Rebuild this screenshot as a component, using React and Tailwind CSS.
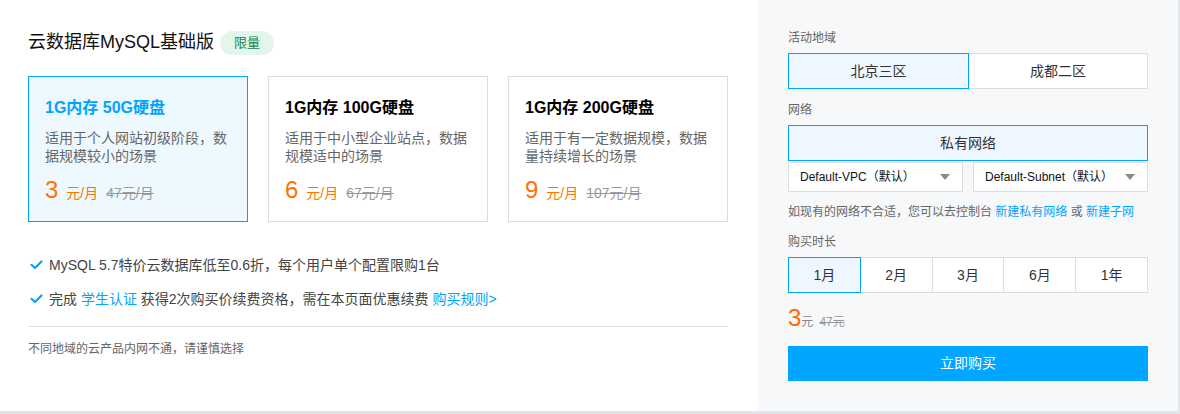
import React from "react";

const FONT = { fontFamily: '"Liberation Sans", "Noto Sans CJK SC", sans-serif' };

function Check() {
  return (
    <svg width="13" height="10" viewBox="0 0 13 10" className="shrink-0">
      <polyline points="1.5,4.8 5,8 11.5,1.5" fill="none" stroke="#00a4ff" strokeWidth="2.2" strokeLinecap="round" strokeLinejoin="round" />
    </svg>
  );
}

function Caret() {
  return (
    <svg width="10" height="6" viewBox="0 0 10 6">
      <polygon points="0,0 10,0 5,6" fill="#8a8a8a" />
    </svg>
  );
}

const plans = [
  { title: "1G内存 50G硬盘", desc: ["适用于个人网站初级阶段，数", "据规模较小的场景"], price: "3", orig: "47元/月", active: true },
  { title: "1G内存 100G硬盘", desc: ["适用于中小型企业站点，数据", "规模适中的场景"], price: "6", orig: "67元/月" },
  { title: "1G内存 200G硬盘", desc: ["适用于有一定数据规模，数据", "量持续增长的场景"], price: "9", orig: "107元/月" },
];

export default function App() {
  return (
    <div style={FONT} className="w-[1180px] h-[414px] bg-[#e1e4e8] overflow-hidden">
      <div className="w-[1178px] h-[411px] flex bg-white">
        {/* Left */}
        <div className="w-[758px] pl-[28px] pr-[30px]">
          <div className="mt-[29px] flex items-center h-[26px]">
            <span className="text-[18px] leading-[26px] text-[#111]">云数据库MySQL基础版</span>
            <span className="ml-[6px] mt-[2px] w-[54px] h-[24px] rounded-full bg-[#e4f6eb] text-[#13864f] text-[13px] flex items-center justify-center">限量</span>
          </div>
          <div className="mt-[21px] flex gap-[20px]">
            {plans.map((p) => (
              <div
                key={p.title}
                className={
                  "w-[220px] h-[146px] border pl-[16px] pt-[20px] " +
                  (p.active ? "border-[#00a4ff] bg-[#eef8ff]" : "border-[#dddddd] bg-white")
                }
              >
                <div className={"text-[16px] leading-[22px] font-bold " + (p.active ? "text-[#00a4ff]" : "text-black")}>{p.title}</div>
                <div className="mt-[10px] text-[14px] leading-[18px] text-[#666]">
                  <div>{p.desc[0]}</div>
                  <div>{p.desc[1]}</div>
                </div>
                <div className="mt-[11px] flex items-baseline h-[28px]">
                  <span className="text-[24px] leading-[28px] text-[#ff7200]">{p.price}</span>
                  <span className="ml-[8px] text-[14px] text-[#ff7200]">元/月</span>
                  <span className="ml-[8px] text-[14px] text-[#999] line-through">{p.orig}</span>
                </div>
              </div>
            ))}
          </div>
          <div className="mt-[33px] flex items-center gap-[6px] h-[20px] text-[14px] text-[#444] pl-[2px]">
            <Check />
            <span>MySQL 5.7特价云数据库低至0.6折，每个用户单个配置限购1台</span>
          </div>
          <div className="mt-[14px] flex items-center gap-[6px] h-[20px] text-[14px] text-[#444] pl-[2px]">
            <Check />
            <span>
              完成 <span className="text-[#00a4ff]">学生认证</span> 获得2次购买价续费资格，需在本页面优惠续费 <span className="text-[#00a4ff]">购买规则&gt;</span>
            </span>
          </div>
          <div className="mt-[17px] h-px bg-[#e3e3e3]" />
          <div className="mt-[13px] text-[12px] leading-[18px] text-[#666]">不同地域的云产品内网不通，请谨慎选择</div>
        </div>

        {/* Right */}
        <div className="flex-1 bg-[#f7f8fa] pl-[30px] pr-[30px]">
          <div className="w-[360px]">
            <div className="mt-[29px] text-[12px] leading-[18px] text-[#666]">活动地域</div>
            <div className="mt-[6px] flex">
              <div className="relative z-10 w-[181px] h-[36px] border border-[#00a4ff] bg-[#eef7ff] flex items-center justify-center text-[14px] text-[#333]">北京三区</div>
              <div className="-ml-px w-[180px] h-[36px] border border-[#dddddd] bg-white flex items-center justify-center text-[14px] text-[#333]">成都二区</div>
            </div>
            <div className="mt-[12px] text-[12px] leading-[18px] text-[#666]">网络</div>
            <div className="mt-[6px] h-[36px] border border-[#00a4ff] bg-[#eef7ff] flex items-center justify-center text-[14px] text-[#333]">私有网络</div>
            <div className="mt-px flex justify-between">
              <div className="w-[175px] h-[30px] border border-[#dddddd] bg-white flex items-center justify-between pl-[11px] pr-[12px] text-[12px] text-[#111]">
                <span>Default-VPC（默认）</span>
                <Caret />
              </div>
              <div className="w-[175px] h-[30px] border border-[#dddddd] bg-white flex items-center justify-between pl-[11px] pr-[12px] text-[12px] text-[#111]">
                <span>Default-Subnet（默认）</span>
                <Caret />
              </div>
            </div>
            <div className="mt-[11px] text-[12px] leading-[18px] text-[#666] whitespace-nowrap">
              如现有的网络不合适，您可以去控制台 <span className="text-[#00a4ff]">新建私有网络</span> 或 <span className="text-[#00a4ff]">新建子网</span>
            </div>
            <div className="mt-[12px] text-[12px] leading-[18px] text-[#666]">购买时长</div>
            <div className="mt-[6px] flex">
              {["1月", "2月", "3月", "6月", "1年"].map((d, i) => (
                <div
                  key={d}
                  className={
                    "h-[36px] flex items-center justify-center text-[14px] text-[#333] border " +
                    (i === 0
                      ? "relative z-10 w-[73px] border-[#00a4ff] bg-[#eef7ff]"
                      : "-ml-px w-[73px] border-[#dddddd] bg-white")
                  }
                >
                  {d}
                </div>
              ))}
            </div>
            <div className="mt-[11px] h-[28px] flex items-baseline">
              <span className="text-[24px] leading-[28px] text-[#ff6a00]">3</span>
              <span className="text-[12px] text-[#888]">元</span>
              <span className="ml-[6px] text-[12px] text-[#999] line-through">47元</span>
            </div>
            <div className="mt-[14px] h-[35px] bg-[#00a6ff] flex items-center justify-center text-[14px] text-white">立即购买</div>
          </div>
        </div>
      </div>
    </div>
  );
}
